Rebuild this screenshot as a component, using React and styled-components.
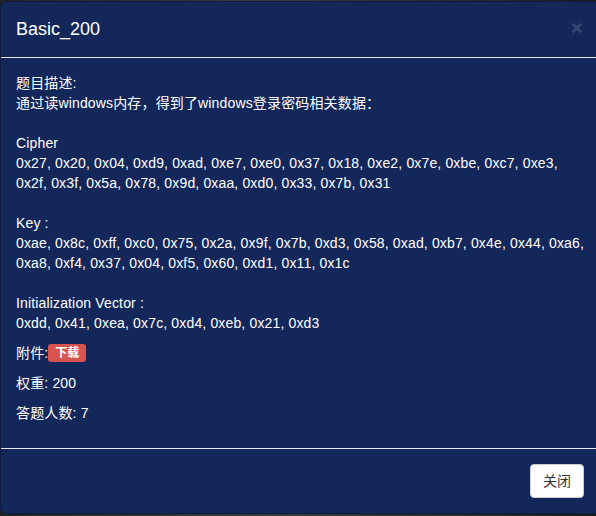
import React from 'react'
import styled, { createGlobalStyle } from 'styled-components'

const GlobalStyle = createGlobalStyle`
  html, body {
    margin: 0;
    padding: 0;
    width: 596px;
    height: 516px;
    overflow: hidden;
    background: #18191d;
  }
  body {
    font-family: "Liberation Sans", "Noto Sans CJK SC", sans-serif;
    font-size: 14px;
    line-height: 20px;
  }
  * {
    box-sizing: border-box;
  }
`

const Backdrop = styled.div`
  width: 596px;
  height: 516px;
  padding: 1px 0 0 0;
  background: linear-gradient(90deg, #222 0%, #3a3a3a 45%, #1c1c1c 100%);
`

const Modal = styled.div`
  width: 600px;
  background: #14275a;
  border: 1px solid rgba(0, 0, 0, 0.3);
  border-radius: 6px;
  color: #fff;
`

const Header = styled.div`
  position: relative;
  padding: 15px;
  border-bottom: 1px solid #e5e5e5;
`

const Title = styled.h4`
  margin: 0;
  font-size: 18px;
  font-weight: 500;
  line-height: 25px;
`

const Close = styled.button`
  position: absolute;
  top: 15px;
  right: 16px;
  padding: 0;
  border: 0;
  background: transparent;
  color: #fff;
  opacity: 0.15;
  font-family: "Liberation Sans", sans-serif;
  font-size: 21px;
  font-weight: bold;
  line-height: 1;
`

const Body = styled.div`
  padding: 15px;
  letter-spacing: 0.15px;
`

const Description = styled.p`
  margin: 0 0 10px;
  white-space: pre-line;
`

const Line = styled.p`
  margin: 0 0 10px;
`

const Label = styled.span`
  display: inline-block;
  padding: 3px 7px 3px;
  background: #d9534f;
  border-radius: 3px;
  color: #fff;
  font-size: 12px;
  font-weight: bold;
  line-height: 12px;
  letter-spacing: 0;
  vertical-align: 1px;
`

const Footer = styled.div`
  display: flex;
  justify-content: flex-end;
  padding: 15px;
  border-top: 1px solid #e5e5e5;
`

const Button = styled.button`
  padding: 6px 12px;
  background: #fff;
  border: 1px solid #ccc;
  border-radius: 4px;
  color: #333;
  font-family: "Liberation Sans", "Noto Sans CJK SC", sans-serif;
  font-size: 14px;
  line-height: 20px;
`

const description = `题目描述:
通过读windows内存，得到了windows登录密码相关数据：

Cipher
0x27, 0x20, 0x04, 0xd9, 0xad, 0xe7, 0xe0, 0x37, 0x18, 0xe2, 0x7e, 0xbe, 0xc7, 0xe3, 0x2f, 0x3f, 0x5a, 0x78, 0x9d, 0xaa, 0xd0, 0x33, 0x7b, 0x31

Key :
0xae, 0x8c, 0xff, 0xc0, 0x75, 0x2a, 0x9f, 0x7b, 0xd3, 0x58, 0xad, 0xb7, 0x4e, 0x44, 0xa6, 0xa8, 0xf4, 0x37, 0x04, 0xf5, 0x60, 0xd1, 0x11, 0x1c

Initialization Vector :
0xdd, 0x41, 0xea, 0x7c, 0xd4, 0xeb, 0x21, 0xd3`

export default function App() {
  return (
    <>
      <GlobalStyle />
      <Backdrop>
        <Modal>
          <Header>
            <Title>Basic_200</Title>
            <Close>×</Close>
          </Header>
          <Body>
            <Description>{description}</Description>
            <Line>
              附件:<Label>下载</Label>
            </Line>
            <Line>权重: 200</Line>
            <Line>答题人数: 7</Line>
          </Body>
          <Footer>
            <Button>关闭</Button>
          </Footer>
        </Modal>
      </Backdrop>
    </>
  )
}
